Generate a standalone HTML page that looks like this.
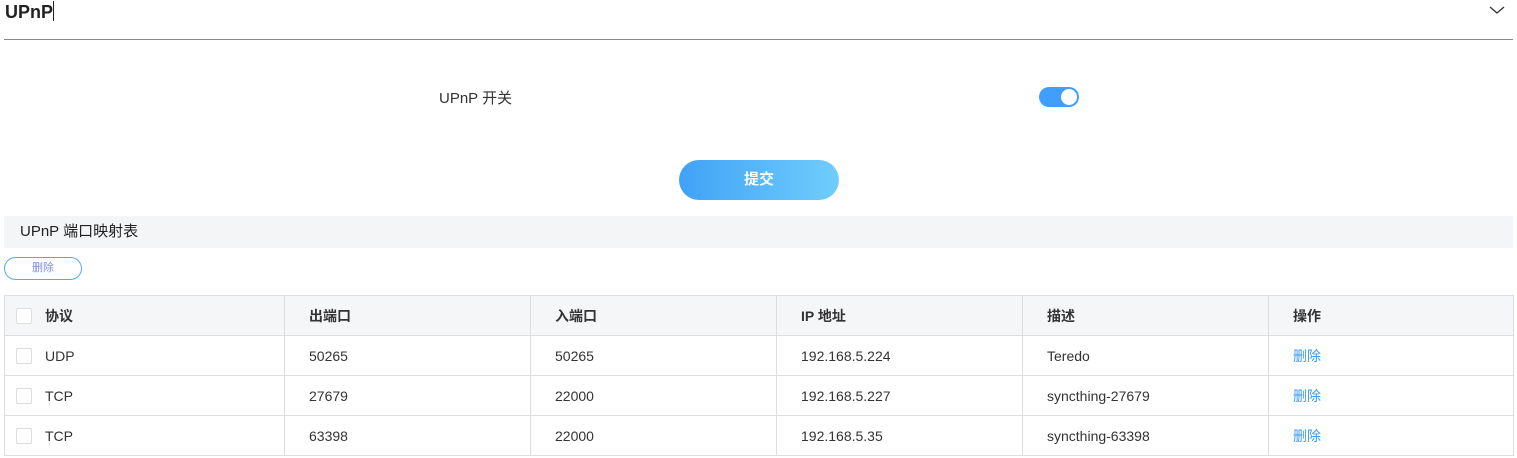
<!DOCTYPE html><html><head><meta charset="utf-8"><style>
body{margin:0;width:1517px;height:458px;background:#fff;font-family:"Liberation Sans","Noto Sans CJK SC",sans-serif;color:#333;position:relative;overflow:hidden}
.a{position:absolute}
table{position:absolute;left:4px;top:295px;width:1510px;border-collapse:collapse;font-size:14px}
td{border:1px solid #ddd;height:40px;padding:0 0 0 24px;box-sizing:border-box}
tr:first-child td{background:#f5f6f8;font-weight:bold;color:#333}
td:first-child{padding-left:40px;position:relative}
.cb{position:absolute;left:11px;top:12px;width:14px;height:14px;border:1px solid #ddd;background:#fff;border-radius:2px}
.l{color:#3a9bef}
</style></head><body>
<div class="a" style="left:5px;top:0;font-size:18px;font-weight:bold;color:#222;line-height:24px">UPnP<span style="display:inline-block;width:1px;height:20px;background:#222;vertical-align:-3px"></span></div>
<svg class="a" style="left:1489px;top:5px" width="16" height="10"><path d="M1 2l7 6 7-6" fill="none" stroke="#333" stroke-width="1.3"/></svg>
<div class="a" style="left:4px;top:39px;width:1509px;height:1px;background:#888"></div>
<div class="a" style="left:439px;top:89px;font-size:15px;line-height:20px">UPnP 开关</div>
<div class="a" style="left:1039px;top:87px;width:40px;height:20px;border-radius:10px;background:#409eff"></div>
<div class="a" style="left:1061px;top:89px;width:16px;height:16px;border-radius:50%;background:#fff"></div>
<div class="a" style="left:679px;top:160px;width:160px;height:40px;border-radius:20px;background:linear-gradient(90deg,#40a2f6,#70cdfc);color:#fff;font-weight:bold;font-size:15px;text-align:center;line-height:40px">提交</div>
<div class="a" style="left:4px;top:216px;width:1509px;height:32px;background:#f4f5f7;font-size:15px;line-height:32px;padding-left:16px;box-sizing:border-box;color:#222">UPnP 端口映射表</div>
<div class="a" style="left:4px;top:257px;width:78px;height:23px;border:1px solid #53a8f5;border-radius:12px;box-sizing:border-box;font-size:11px;color:#7b8cf0;text-align:center;line-height:21px">删除</div>
<table>
<tr><td style="width:280px"><span class="cb"></span>协议</td><td style="width:246px">出端口</td><td style="width:246px">入端口</td><td style="width:246px">IP 地址</td><td style="width:246px">描述</td><td>操作</td></tr>
<tr><td><span class="cb"></span>UDP</td><td>50265</td><td>50265</td><td>192.168.5.224</td><td>Teredo</td><td class="l">删除</td></tr>
<tr><td><span class="cb"></span>TCP</td><td>27679</td><td>22000</td><td>192.168.5.227</td><td>syncthing-27679</td><td class="l">删除</td></tr>
<tr><td><span class="cb"></span>TCP</td><td>63398</td><td>22000</td><td>192.168.5.35</td><td>syncthing-63398</td><td class="l">删除</td></tr>
</table>
</body></html>
